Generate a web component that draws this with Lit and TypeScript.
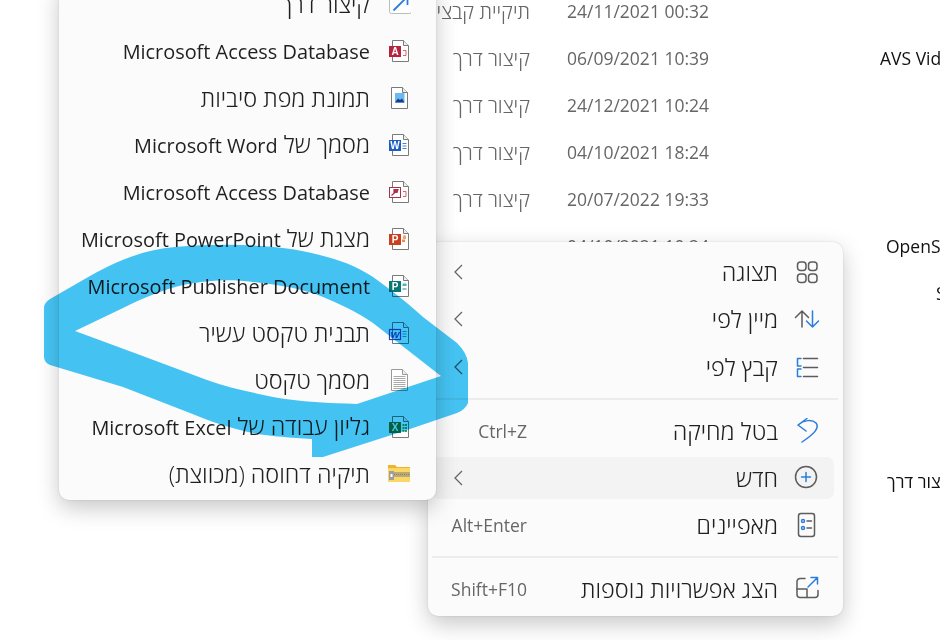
import { LitElement, html, svg, css } from 'lit';
import { customElement } from 'lit/decorators.js';

const GREY = '#7a7a7a';
const DARK = '#5c5c5c';
const BLUE = '#2a7ddb';

const page = (x = 5, fill = '#fff', stroke = GREY) => svg`
  <path d="M${x + 0.5} 1.5h11l5 5v16h-16z" fill=${fill} stroke=${stroke} />
  <path d="M${x + 11.5} 1.5v5h5" fill="#eee" stroke=${stroke} />`;

const badge = (letter: string, color: string) => svg`
  <rect x="2" y="7" width="12" height="11" fill=${color} />
  <text x="8" y="16" text-anchor="middle" font-family="Liberation Sans" font-weight="700" font-size="10" fill="#fff">${letter}</text>`;

const FILE_ICONS: Record<string, unknown> = {
  shortcut: html`<svg viewBox="0 0 24 24"><rect x="2.5" y="0.5" width="22" height="21" rx="2" fill="#fff" stroke="#bbb" />
    <path d="M6.5 18.5L20 5M12 4.5h8.5v8.5" fill="none" stroke=${BLUE} stroke-width="1.8" /></svg>`,
  access: html`<svg viewBox="0 0 24 24">${page()}
    <path d="M16 11.5h3v5h-3" fill="none" stroke="#d8636f" />${badge('A', '#b7233f')}</svg>`,
  bitmap: html`<svg viewBox="0 0 24 24">${page(4)}
    <rect x="8" y="7" width="9.5" height="9.5" fill="#6db8ee" />
    <path d="M8 16.5l3-4 2 1.5 2-1.5 2.5 4z" fill="#123f8c" /></svg>`,
  word: html`<svg viewBox="0 0 24 24">${page()}
    <path d="M15.5 10.5h4M15.5 13h4M15.5 15.5h4" stroke="#4a7fd6" />${badge('W', '#1f5cc2')}</svg>`,
  accessPage: html`<svg viewBox="0 0 24 24">${page()}
    <path d="M16 11.5h3v5h-3" fill="none" stroke="#d8636f" />
    <rect x="2.5" y="7.5" width="11" height="10" fill="#fff" stroke="#a8324a" />
    <path d="M4.5 15.5l4-3.5M7 9.5h4l-1 3H7z" stroke="#a8324a" fill="#a8324a" stroke-width="1.2" /></svg>`,
  powerpoint: html`<svg viewBox="0 0 24 24">${page()}
    <path d="M16 8.5h3V12h-3z" fill="#f3a16b" /><path d="M15 12.5h3V15h-3z" fill="#ee8a50" />${badge('P', '#c8401f')}</svg>`,
  publisher: html`<svg viewBox="0 0 24 24">${page()}
    <path d="M15.5 9.5h4V12h-4z" fill="#41b7c4" /><path d="M15.5 15h4" stroke="#1e8a8a" />${badge('P', '#0b7773')}</svg>`,
  template: html`<svg viewBox="0 0 24 24">${page(5, '#fff', '#5f7f8a')}
    <path d="M15.5 10.5h4M15.5 13h4M15.5 15.5h4" stroke="#2d9fb8" />
    <rect x="2.5" y="8.5" width="11" height="10" fill="none" stroke="#2048b8" stroke-width="1.2" />
    <text x="8" y="17" text-anchor="middle" font-family="Liberation Sans" font-style="italic" font-weight="700" font-size="9.5" fill="#2048b8">W</text></svg>`,
  text: html`<svg viewBox="0 0 24 24">${page(4, '#fff', '#999')}
    <path d="M6.5 8.5h12M6.5 10.5h12M6.5 12.5h12M6.5 14.5h12M6.5 16.5h12M6.5 18.5h12M6.5 20.5h12" stroke="#aaa" /></svg>`,
  excel: html`<svg viewBox="0 0 24 24">${page()}
    <path d="M15.5 9h2v2h-2zM18 9h2v2h-2zM15.5 12h2v2h-2zM18 12h2v2h-2zM15.5 15h2v2h-2zM18 15h2v2h-2z" fill="#22a366" />${badge('X', '#107c41')}</svg>`,
  zip: html`<svg viewBox="0 0 24 24">
    <path d="M1 3h7l2 2h13v4H1z" fill="#eeb32c" />
    <rect x="1" y="6" width="22" height="14" fill="#fdd766" />
    <rect x="7" y="10" width="16" height="5" fill="#b9a878" />
    <path d="M7 12.5h16" stroke="#8c8160" stroke-dasharray="1 1" />
    <rect x="2" y="9" width="5" height="9" fill="#9f9f9f" /><rect x="3.5" y="12" width="2" height="3" fill="#fff" /></svg>`,
};

const icon = (body: unknown) => html`<svg class="icon" viewBox="0 0 26 26" fill="none" stroke=${DARK} stroke-width="1.5" stroke-linecap="round" stroke-linejoin="round">${body}</svg>`;

const MENU_ICONS: Record<string, unknown> = {
  view: icon(svg`<rect x="3.5" y="3" width="8.5" height="8.5" rx="3" /><rect x="14.5" y="3" width="8.5" height="8.5" rx="3" />
    <rect x="3.5" y="15" width="8.5" height="8.5" rx="3" /><rect x="14.5" y="15" width="8.5" height="8.5" rx="3" />`),
  sort: icon(svg`<path d="M8 21V5M1.5 11.5L8 5l6.5 6.5" />
    <path d="M18.5 5v16M12.5 15l6 6 6-6" stroke=${BLUE} />`),
  group: icon(svg`<path d="M7 4.5H3.5V12H7M7 15H3.5v7.5H7" stroke=${BLUE} />
    <path d="M9.5 4.5h14M9.5 13.5h14M9.5 22.5h14" />`),
  undo: icon(svg`<path d="M13 0.500L4 7l8 6M4 7c6-5 14-6 18-2 4 5-2 11-14 19" stroke=${BLUE} />`),
  plus: icon(svg`<circle cx="12" cy="12" r="10.5" /><path d="M12 7.5v9M7.5 12h9" stroke=${BLUE} />`),
  props: icon(svg`<rect x="4.5" y="1.5" width="16" height="23" rx="2.5" />
    <circle cx="9" cy="9" r="1.5" stroke=${BLUE} /><circle cx="9" cy="16" r="1.5" stroke=${BLUE} />
    <path d="M13 9h4.5M13 16h4.5" />`),
  more: icon(svg`<path d="M11 2.5H6a3 3 0 0 0-3 3v13a3 3 0 0 0 3 3h15a3 3 0 0 0 3-3v-4" />
    <path d="M3 13h10v8.5" /><path d="M14 11l9.5-9.5M17 1.5h6.500V8" stroke=${BLUE} />`),
};

const FILE_TYPES: [string, string][] = [
  ['קיצור דרך', 'shortcut'],
  ['Microsoft Access Database', 'access'],
  ['תמונת מפת סיביות', 'bitmap'],
  ['מסמך של Microsoft Word', 'word'],
  ['Microsoft Access Database', 'accessPage'],
  ['מצגת של Microsoft PowerPoint', 'powerpoint'],
  ['Microsoft Publisher Document', 'publisher'],
  ['תבנית טקסט עשיר', 'template'],
  ['מסמך טקסט', 'text'],
  ['גליון עבודה של Microsoft Excel', 'excel'],
  ['תיקיה דחוסה (מכווצת)', 'zip'],
];

interface FileRow { type?: string; date?: string; name?: string; x?: number }

const FILES: FileRow[] = [
  { type: 'תיקיית קבצים', date: '24/11/2021 00:32' },
  { type: 'קיצור דרך', date: '06/09/2021 10:39', name: 'AVS Video Editor', x: 880 },
  { type: 'קיצור דרך', date: '24/12/2021 10:24' },
  { type: 'קיצור דרך', date: '04/10/2021 18:24' },
  { type: 'קיצור דרך', date: '20/07/2022 19:33' },
  { date: '04/10/2021 10:24', name: 'OpenShot', x: 886 },
  { name: 'S', x: 936 },
  {},
  {},
  {},
  { name: 'קיצור דרך', x: 887 },
];

interface MenuRow { label: string; icon: string; key?: string; sub?: boolean; active?: boolean; sep?: boolean }

const MENU: MenuRow[] = [
  { label: 'תצוגה', icon: 'view', sub: true },
  { label: 'מיין לפי', icon: 'sort', sub: true },
  { label: 'קבץ לפי', icon: 'group', sub: true, sep: true },
  { label: 'בטל מחיקה', icon: 'undo', key: 'Ctrl+Z' },
  { label: 'חדש', icon: 'plus', sub: true, active: true },
  { label: 'מאפיינים', icon: 'props', key: 'Alt+Enter', sep: true },
  { label: 'הצג אפשרויות נוספות', icon: 'more', key: 'Shift+F10' },
];

// Segoe's Hebrew runs wider than Open Sans' so latin runs get their own size
const runs = (label: string) =>
  label.split(/([A-Za-z][A-Za-z ]*)/).map((part, i) => (i % 2 ? html`<span class="lat">${part}</span>` : part));

@customElement('app-root')
export class AppRoot extends LitElement {
  static styles = css`
    :host {
      display: block;
      position: relative;
      width: 940px;
      height: 640px;
      overflow: hidden;
      background: #fff;
      font-family: 'Open Sans', 'Liberation Sans', sans-serif;
      color: #1f1f1f;
    }

    .files {
      margin-top: -13px;
      font-size: 17.5px;
      color: #666;
    }

    .file {
      display: grid;
      grid-template-columns: 530px 142px 1fr;
      column-gap: 37px;
      height: 47px;
      align-items: center;
      white-space: nowrap;
    }

    .file .type {
      text-align: right;
      font-size: 20.3px;
      font-weight: 300;
    }

    .file .name {
      grid-column: 3;
      color: #111;
      position: absolute;
    }

    .menu {
      position: absolute;
      background: #fbfbfb;
      border-radius: 10px;
      box-shadow: 0 8px 22px rgba(0, 0, 0, 0.22), 0 0 2px rgba(0, 0, 0, 0.14);
      font-size: 23.4px;
      font-weight: 300;
      line-height: 30px;
    }

    .lat {
      font-size: 19.9px;
      font-weight: 400;
    }

    .types {
      left: 59px;
      width: 377px;
      bottom: 140px;
      padding-bottom: 2.5px;
    }

    .type-row {
      display: flex;
      align-items: center;
      justify-content: flex-end;
      height: 47px;
      padding-right: 25px;
      gap: 17px;
      white-space: nowrap;
    }

    .type-row svg {
      width: 24px;
      height: 24px;
      flex: none;
    }

    .actions {
      left: 428px;
      top: 242px;
      width: 415px;
      box-sizing: border-box;
      display: flex;
      flex-direction: column;
      padding: 9px 9px 0 4px;
    }

    .action {
      display: flex;
      align-items: center;
      height: 42px;
      flex: none;
      margin-bottom: 5.33px;
      padding-right: 14px;
      border-radius: 7px;
      white-space: nowrap;
    }

    .action.active {
      background: #f3f3f3;
    }

    .action .icon {
      width: 26px;
      height: 26px;
      margin-left: 16px;
      flex: none;
    }

    .action .label {
      margin-left: auto;
    }

    .action .key {
      position: absolute;
      right: 316px;
      font-size: 17.5px;
      font-weight: 400;
      color: #666;
    }

    .chev {
      width: 10px;
      height: 16px;
      margin-left: 21px;
    }

    .sep {
      flex: none;
      height: 2px;
      margin: 4.67px -4px 10px 0;
      background: #ececec;
    }

    .ink {
      position: absolute;
      inset: 0;
      width: 940px;
      height: 640px;
      mix-blend-mode: multiply;
      pointer-events: none;
    }
  `;

  render() {
    return html`
      <div class="files">
        ${FILES.map(
          (f) => html`<div class="file">
            <span class="type" dir="rtl">${f.type ?? ''}</span>
            <span>${f.date ?? ''}</span>
            ${f.name ? html`<span class="name" style="left:${f.x}px">${f.name}</span>` : ''}
          </div>`
        )}
      </div>

      <div class="menu actions">
        ${MENU.map(
          (m) => html`
            <div class="action ${m.active ? 'active' : ''}">
              ${m.sub
                ? html`<svg class="chev" viewBox="0 0 10 16" fill="none" stroke="#666" stroke-width="1.3"><path d="M9 1L2 8l7 7" /></svg>`
                : ''}
              ${m.key ? html`<span class="key">${m.key}</span>` : ''}
              <span class="label" dir="rtl">${m.label}</span>
              ${MENU_ICONS[m.icon]}
            </div>
            ${m.sep ? html`<div class="sep"></div>` : ''}
          `
        )}
      </div>

      <div class="menu types">
        ${FILE_TYPES.map(
          ([label, name]) => html`<div class="type-row">
            <span dir="rtl">${runs(label)}</span>${FILE_ICONS[name]}
          </div>`
        )}
      </div>

      <svg class="ink" viewBox="0 0 940 640">
        <path
          fill="#45c6f6"
          fill-rule="evenodd"
          d="M44 307Q45 302 50 299L83 280C110 264 140 250 175 247C215 244 265 243 307 252C335 258 355 265 373 277C395 293 410 305 423 317L457 343Q467 353 468 363L468 403Q465 410 457 413L407 430L323 457L312 457L312 439C285 437 262 436 240 430C220 425 205 419 190 413L123 387L50 365Q44 362 44 357Z
             M75 331L123 308C145 297 165 289 183 285C210 280 230 279 253 282C280 285 303 289 323 297C340 304 357 312 373 323L437 373L441 376L357 404C330 403 300 402 273 397C250 392 228 388 207 380L140 355Z"
        />
      </svg>
    `;
  }
}
